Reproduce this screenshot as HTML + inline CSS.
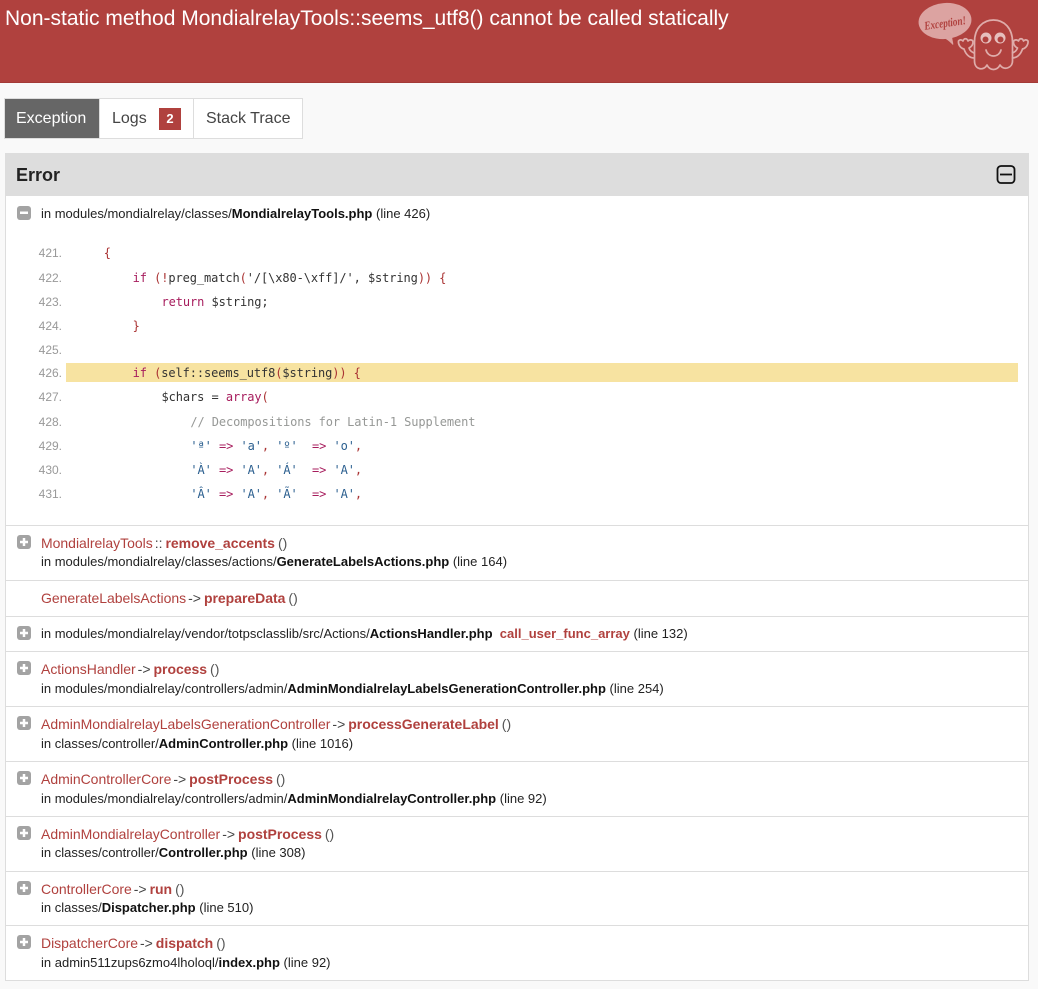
<!DOCTYPE html>
<html><head><meta charset="utf-8"><style>
html,body{margin:0;padding:0;width:1038px;height:989px;overflow:hidden;background:#f9f9f9;font-family:"Liberation Sans",Arial,sans-serif;color:#222}
.a{position:absolute;white-space:pre}
#hd{position:absolute;left:0;top:0;width:1038px;height:82px;background:#b0413e;border-bottom:1px solid #a33a37}
#title{left:5px;top:6px;font-size:21px;line-height:26px;color:#fff}
.tab{position:absolute;top:98px;height:39px;background:#fff;border:1px solid #ddd;font-size:16px;line-height:37px;color:#444;box-sizing:content-box}
#panel{position:absolute;left:5px;top:153px;width:1022px;height:826px;background:#fff;border:1px solid #ddd}
#phead{position:absolute;left:5px;top:153px;width:1024px;height:43px;background:#ddd}
.hr{position:absolute;left:6px;width:1022px;height:1px;background:#ddd}
.t{font-size:13px;line-height:16px;color:#222;left:41px}
.t b{color:#111}
.m{font-size:14px;letter-spacing:-.02px}
.c{color:#b0413e}
.c b{color:#b0413e}
.s{color:#444;margin:0 3px 0 2px}
.e{color:#555;margin-left:3px}
.ln{left:20px;width:42px;text-align:right;font-size:12px;line-height:16px;color:#999}
.k{left:74.800px;font-family:"DejaVu Sans Mono",monospace;font-size:12px;line-height:16px;color:#222}
.k span{letter-spacing:-.1px}
.r{color:#a71d5d}.p{color:#a33}.d{color:#2b5f8f}.q{color:#333}.g{color:#969896}.f{color:#333}
svg{position:absolute}
</style></head><body>
<div id="hd"></div>
<div class="a" id="title">Non-static method MondialrelayTools::seems_utf8() cannot be called statically</div>
<svg style="left:910px;top:0" width="128" height="75" viewBox="0 0 128 75">
<ellipse cx="35" cy="21" rx="26.500" ry="18" fill="#dca3a1" transform="rotate(-5 35 21)"/>
<path d="M31 37C35 38 38 40 43 45C44 44 42 40 42 35Z" fill="#dca3a1"/>
<text x="14" y="27" font-family="Liberation Serif,serif" font-style="italic" font-weight="bold" font-size="12" textLength="42" lengthAdjust="spacingAndGlyphs" fill="#b0413e" transform="rotate(-8 35 22)">Exception!</text>
<g fill="none" stroke="#dfacaa" stroke-width="1.700" stroke-linecap="round" stroke-linejoin="round">
<path d="M64.500 42C64.500 28 73 20 83.500 20C94 20 102.500 28 102.500 42V61C102.500 68 94 71 90 65C87 71 80 71 77 65C74 71 64.500 70 64.500 61Z"/>
<path d="M76 50C78 58 89 58 91 50"/>
<path d="M64 58C60 58 56 55 54 49C50 48 48 44 48.500 41C50 39 52 40 53 41C54 38 57 38 58 41C60 39 63 40 63 42C63 45 61 47 59 48C60 51 62 52 64 53"/>
<path d="M64 58C60 58 56 55 54 49C50 48 48 44 48.500 41C50 39 52 40 53 41C54 38 57 38 58 41C60 39 63 40 63 42C63 45 61 47 59 48C60 51 62 52 64 53" transform="translate(166.500,0) scale(-1,1)"/>
</g>
<circle cx="76" cy="38" r="5.500" fill="#e6bfbd"/><circle cx="90" cy="38" r="5.500" fill="#e6bfbd"/>
<circle cx="75.500" cy="39.500" r="3" fill="#b0413e"/><circle cx="90.500" cy="39.500" r="3" fill="#b0413e"/>
</svg>

<div class="tab" style="left:4px;width:94px;background:#666;color:#fff"><span class="a" style="left:11px;top:1px">Exception</span></div>
<div class="tab" style="left:99px;width:93px"><span class="a" style="left:12px;top:1px">Logs</span><span class="a" style="left:59px;top:9px;width:22px;height:22px;background:#b0413e;color:#fff;font-weight:bold;font-size:13px;line-height:22px;text-align:center">2</span></div>
<div class="tab" style="left:193px;width:108px"><span class="a" style="left:12px;top:1px">Stack Trace</span></div>

<div id="panel"></div>
<div id="phead"></div>
<div class="a" style="left:16px;top:165px;font-size:18px;line-height:21px;font-weight:bold;color:#222">Error</div>
<svg style="left:996px;top:165px" width="20" height="20" viewBox="0 0 20 20"><rect x="1.500" y="1" width="17" height="17" rx="3.500" fill="none" stroke="#111" stroke-width="1.800"/><path d="M4 9.500H16" stroke="#111" stroke-width="1.800"/></svg>

<svg style="left:17px;top:206px" width="14" height="14"><rect width="14" height="14" rx="3" fill="#a3a3a3"/><rect x="3" y="5.500" width="8" height="2.500" fill="#fff"/></svg>
<div class="a t" style="top:206px">in modules/mondialrelay/classes/<b>MondialrelayTools.php</b> (line 426)</div>

<div style="position:absolute;left:66px;top:363px;width:952px;height:19px;background:#f7e3a1"></div>
<div class="a ln" style="top:245px">421.</div><div class="a k" style="top:245px">    <span class="p">{</span></div>
<div class="a ln" style="top:270px">422.</div><div class="a k" style="top:270px">        <span class="r">if</span> <span class="p">(!</span><span class="f">preg_match</span><span class="p">(</span><span class="q">'/[\x80-\xff]/'</span><span class="q">,</span> <span class="f">$string</span><span class="p">)) {</span></div>
<div class="a ln" style="top:294px">423.</div><div class="a k" style="top:294px">            <span class="r">return</span> <span class="f">$string;</span></div>
<div class="a ln" style="top:318px">424.</div><div class="a k" style="top:318px">        <span class="p">}</span></div>
<div class="a ln" style="top:342px">425.</div>
<div class="a ln" style="top:365px">426.</div><div class="a k" style="top:365px">        <span class="r">if</span> <span class="p">(</span><span class="f">self::seems_utf8</span><span class="p">(</span><span class="f">$string</span><span class="p">)) {</span></div>
<div class="a ln" style="top:389px">427.</div><div class="a k" style="top:389px">            <span class="f">$chars</span> <span class="q">=</span> <span class="r">array</span><span class="p">(</span></div>
<div class="a ln" style="top:414px">428.</div><div class="a k" style="top:414px">                <span class="g">// Decompositions for Latin-1 Supplement</span></div>
<div class="a ln" style="top:438px">429.</div><div class="a k" style="top:438px">                <span class="d">'ª'</span> <span class="r">=&gt;</span> <span class="d">'a'</span><span class="p">,</span> <span class="d">'º'</span>  <span class="r">=&gt;</span> <span class="d">'o'</span><span class="p">,</span></div>
<div class="a ln" style="top:462px">430.</div><div class="a k" style="top:462px">                <span class="d">'À'</span> <span class="r">=&gt;</span> <span class="d">'A'</span><span class="p">,</span> <span class="d">'Á'</span>  <span class="r">=&gt;</span> <span class="d">'A'</span><span class="p">,</span></div>
<div class="a ln" style="top:486px">431.</div><div class="a k" style="top:486px">                <span class="d">'Â'</span> <span class="r">=&gt;</span> <span class="d">'A'</span><span class="p">,</span> <span class="d">'Ã'</span>  <span class="r">=&gt;</span> <span class="d">'A'</span><span class="p">,</span></div>

<div class="hr" style="top:525px"></div>
<div class="hr" style="top:580px"></div>
<div class="hr" style="top:616px"></div>
<div class="hr" style="top:651px"></div>
<div class="hr" style="top:706px"></div>
<div class="hr" style="top:761px"></div>
<div class="hr" style="top:816px"></div>
<div class="hr" style="top:871px"></div>
<div class="hr" style="top:925px"></div>

<svg style="left:17px;top:535px" width="14" height="14"><rect width="14" height="14" rx="3" fill="#a3a3a3"/><path d="M3 7H11M7 3V11" stroke="#fff" stroke-width="2.500"/></svg>
<div class="a t m" style="top:535px"><span class="c">MondialrelayTools</span><span class="s">::</span><span class="c"><b>remove_accents</b></span><span class="e">()</span></div>
<div class="a t" style="top:554px">in modules/mondialrelay/classes/actions/<b>GenerateLabelsActions.php</b> (line 164)</div>

<div class="a t m" style="top:590px"><span class="c">GenerateLabelsActions</span><span class="s">-&gt;</span><span class="c"><b>prepareData</b></span><span class="e">()</span></div>

<svg style="left:17px;top:626px" width="14" height="14"><rect width="14" height="14" rx="3" fill="#a3a3a3"/><path d="M3 7H11M7 3V11" stroke="#fff" stroke-width="2.500"/></svg>
<div class="a t" style="top:626px">in modules/mondialrelay/vendor/totpsclasslib/src/Actions/<b>ActionsHandler.php</b>  <span class="c"><b>call_user_func_array</b></span> (line 132)</div>

<svg style="left:17px;top:661px" width="14" height="14"><rect width="14" height="14" rx="3" fill="#a3a3a3"/><path d="M3 7H11M7 3V11" stroke="#fff" stroke-width="2.500"/></svg>
<div class="a t m" style="top:661px"><span class="c">ActionsHandler</span><span class="s">-&gt;</span><span class="c"><b>process</b></span><span class="e">()</span></div>
<div class="a t" style="top:681px">in modules/mondialrelay/controllers/admin/<b>AdminMondialrelayLabelsGenerationController.php</b> (line 254)</div>

<svg style="left:17px;top:716px" width="14" height="14"><rect width="14" height="14" rx="3" fill="#a3a3a3"/><path d="M3 7H11M7 3V11" stroke="#fff" stroke-width="2.500"/></svg>
<div class="a t m" style="top:716px"><span class="c">AdminMondialrelayLabelsGenerationController</span><span class="s">-&gt;</span><span class="c"><b>processGenerateLabel</b></span><span class="e">()</span></div>
<div class="a t" style="top:736px">in classes/controller/<b>AdminController.php</b> (line 1016)</div>

<svg style="left:17px;top:771px" width="14" height="14"><rect width="14" height="14" rx="3" fill="#a3a3a3"/><path d="M3 7H11M7 3V11" stroke="#fff" stroke-width="2.500"/></svg>
<div class="a t m" style="top:771px"><span class="c">AdminControllerCore</span><span class="s">-&gt;</span><span class="c"><b>postProcess</b></span><span class="e">()</span></div>
<div class="a t" style="top:791px">in modules/mondialrelay/controllers/admin/<b>AdminMondialrelayController.php</b> (line 92)</div>

<svg style="left:17px;top:826px" width="14" height="14"><rect width="14" height="14" rx="3" fill="#a3a3a3"/><path d="M3 7H11M7 3V11" stroke="#fff" stroke-width="2.500"/></svg>
<div class="a t m" style="top:826px"><span class="c">AdminMondialrelayController</span><span class="s">-&gt;</span><span class="c"><b>postProcess</b></span><span class="e">()</span></div>
<div class="a t" style="top:845px">in classes/controller/<b>Controller.php</b> (line 308)</div>

<svg style="left:17px;top:881px" width="14" height="14"><rect width="14" height="14" rx="3" fill="#a3a3a3"/><path d="M3 7H11M7 3V11" stroke="#fff" stroke-width="2.500"/></svg>
<div class="a t m" style="top:881px"><span class="c">ControllerCore</span><span class="s">-&gt;</span><span class="c"><b>run</b></span><span class="e">()</span></div>
<div class="a t" style="top:900px">in classes/<b>Dispatcher.php</b> (line 510)</div>

<svg style="left:17px;top:935px" width="14" height="14"><rect width="14" height="14" rx="3" fill="#a3a3a3"/><path d="M3 7H11M7 3V11" stroke="#fff" stroke-width="2.500"/></svg>
<div class="a t m" style="top:935px"><span class="c">DispatcherCore</span><span class="s">-&gt;</span><span class="c"><b>dispatch</b></span><span class="e">()</span></div>
<div class="a t" style="top:955px">in admin511zups6zmo4lholoql/<b>index.php</b> (line 92)</div>
</body></html>
